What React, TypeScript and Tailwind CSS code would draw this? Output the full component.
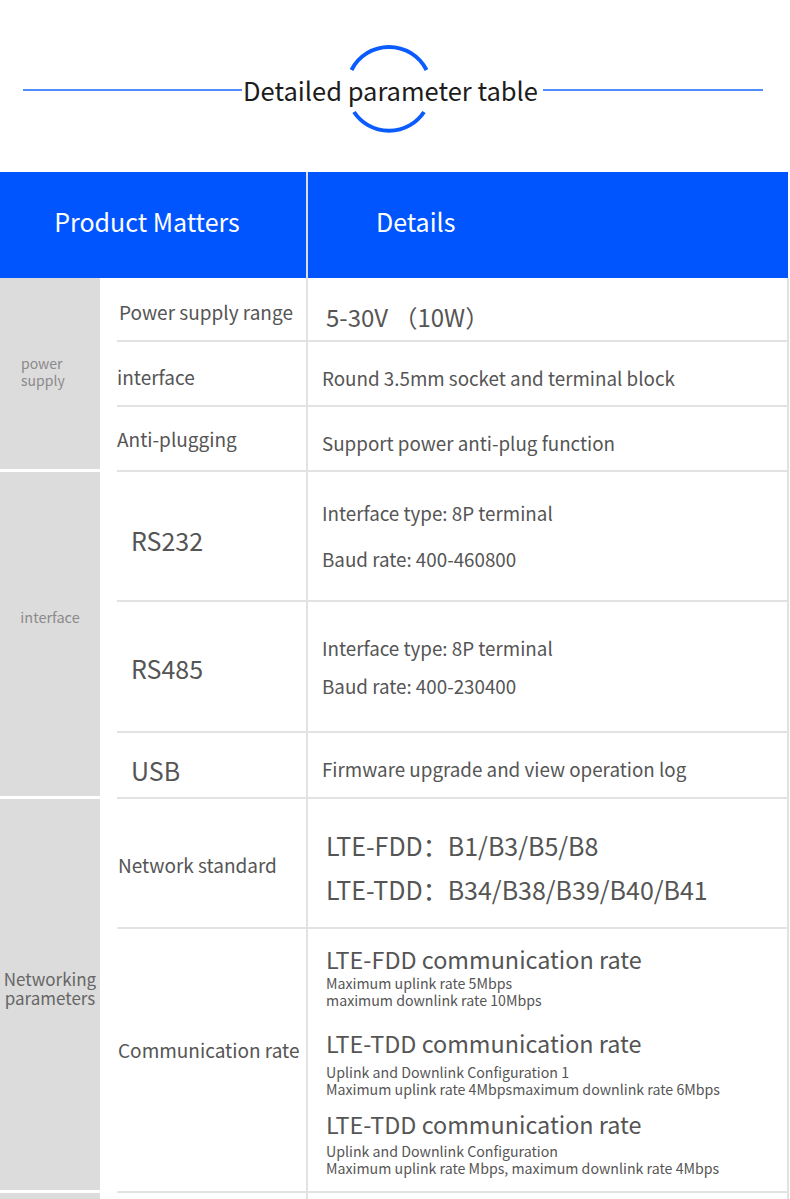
import React from "react"

const font = { fontFamily: '"Noto Sans CJK SC", "Noto Sans", sans-serif' }

type Row = {
  label: React.ReactNode
  detail: React.ReactNode
  h: string
}

type Group = {
  name: React.ReactNode
  rows: Row[]
}

const groups: Group[] = [
  {
    name: (
      <span className="block w-full pl-[21px] pb-[4px] text-left text-[14px] leading-[17px] text-[#8a8a8a]">
        power
        <br />
        supply
      </span>
    ),
    rows: [
      {
        h: "h-[64px]",
        label: <span className="pt-[6px] pl-[2px] text-[19px] text-[#555]">Power supply range</span>,
        detail: <span className="pt-[16px] pl-[18px] text-[24px] text-[#555]">5-30V （10W）</span>,
      },
      {
        h: "h-[65px]",
        label: <span className="pt-[8px] text-[19px] text-[#555]">interface</span>,
        detail: <span className="pt-[10px] pl-[14px] text-[18.8px] text-[#555]">Round 3.5mm socket and terminal block</span>,
      },
      {
        h: "h-[65px]",
        label: <span className="pt-[2px] text-[19px] text-[#555]">Anti-plugging</span>,
        detail: <span className="pt-[10px] pl-[14px] text-[18.8px] text-[#555]">Support power anti-plug function</span>,
      },
    ],
  },
  {
    name: <span className="block pb-[34px] text-[14.5px] text-[#8a8a8a]">interface</span>,
    rows: [
      {
        h: "h-[130px]",
        label: <span className="pt-[10px] pl-[14px] text-[25px] text-[#555]">RS232</span>,
        detail: (
          <div className="pl-[14px] text-[18.8px] text-[#555] leading-[26px]">
            <div>Interface type: 8P terminal</div>
            <div className="mt-[20px]">Baud rate: 400-460800</div>
          </div>
        ),
      },
      {
        h: "h-[131px]",
        label: <span className="pt-[4px] pl-[14px] text-[25px] text-[#555]">RS485</span>,
        detail: (
          <div className="pl-[14px] text-[18.8px] text-[#555] leading-[26px]">
            <div>Interface type: 8P terminal</div>
            <div className="mt-[12px]">Baud rate: 400-230400</div>
          </div>
        ),
      },
      {
        h: "h-[66px]",
        label: <span className="pt-[12px] pl-[14px] text-[25px] text-[#555]">USB</span>,
        detail: <span className="pt-[8px] pl-[14px] text-[18.8px] text-[#555]">Firmware upgrade and view operation log</span>,
      },
    ],
  },
  {
    name: (
      <span className="block pb-[14px] text-[17px] leading-[19px] text-[#666]">
        Networking
        <br />
        parameters
      </span>
    ),
    rows: [
      {
        h: "h-[130px]",
        label: <span className="pt-[4px] pl-px text-[19px] text-[#555]">Network standard</span>,
        detail: (
          <div className="pl-[18px] pt-[8px] text-[25px] text-[#555] leading-[34px]">
            <div>LTE-FDD：B1/B3/B5/B8</div>
            <div className="mt-[10px]">LTE-TDD：B34/B38/B39/B40/B41</div>
          </div>
        ),
      },
      {
        h: "h-[264px]",
        label: <span className="pb-[20px] pl-px text-[19px] text-[#555]">Communication rate</span>,
        detail: (
          <div className="self-start pl-[18px] pt-[16px] text-[#555]">
            <div className="text-[23.4px] leading-[28px]">LTE-FDD communication rate</div>
            <div className="mt-[2px] text-[14.2px] leading-[17px]">
              Maximum uplink rate 5Mbps
              <br />
              maximum downlink rate 10Mbps
            </div>
            <div className="mt-[20px] text-[23.4px] leading-[28px]">LTE-TDD communication rate</div>
            <div className="mt-[7px] text-[14.2px] leading-[17px]">
              Uplink and Downlink Configuration 1
              <br />
              Maximum uplink rate 4Mbpsmaximum downlink rate 6Mbps
            </div>
            <div className="mt-[12px] text-[23.4px] leading-[28px]">LTE-TDD communication rate</div>
            <div className="mt-[5px] text-[14.2px] leading-[17px]">
              Uplink and Downlink Configuration
              <br />
              Maximum uplink rate Mbps, maximum downlink rate 4Mbps
            </div>
          </div>
        ),
      },
    ],
  },
  {
    name: <span />,
    rows: [
      {
        h: "h-[80px]",
        label: <span />,
        detail: <span />,
      },
    ],
  },
]

function Title() {
  return (
    <div className="relative h-[172px]">
      <div className="flex items-center pl-[23px] pr-[27px] pt-[75px]">
        <div className="h-[2px] w-[219px] bg-[#4f8dff]" />
        <div className="pl-[1px] pr-[5px] text-[25.5px] leading-[30px] text-[#1c1c1c]">Detailed parameter table</div>
        <div className="h-[2px] flex-1 bg-[#4f8dff]" />
      </div>
      <svg className="absolute left-[339px] top-[39px]" width="100" height="100" viewBox="0 0 100 100" fill="none">
        <path d="M12.5 31 A42 42 0 0 1 87.5 31" stroke="#0a5cff" strokeWidth="4" />
        <path d="M15 73 A42 42 0 0 0 85 73" stroke="#0a5cff" strokeWidth="4" />
      </svg>
    </div>
  )
}

export default function App() {
  return (
    <div className="w-[790px] h-[1199px] overflow-hidden bg-white" style={font}>
      <Title />
      <div className="flex h-[106px]">
        <div className="flex w-[306px] items-center justify-center bg-[#0055ff] pb-[6px] pr-[12px] text-[25px] text-white">
          Product Matters
        </div>
        <div className="w-[2px] bg-[#dcdcdc]" />
        <div className="flex w-[480px] items-center bg-[#0055ff] pb-[6px] pl-[68px] text-[25px] text-white">
          Details
        </div>
      </div>
      {groups.map((g, i) => (
        <div key={i} className="flex">
          <div className="flex w-[100px] items-center justify-center border-b-[3px] border-white bg-[#dcdcdc] text-center">
            {g.name}
          </div>
          <div className="w-[17px]" />
          <div className="w-[672px]">
            {g.rows.map((r, j) => (
              <div key={j} className={`flex border-b-2 border-[#e2e2e2] ${r.h}`}>
                <div className="flex w-[189px] items-center">{r.label}</div>
                <div className="flex flex-1 items-center border-l-2 border-r-2 border-[#e2e2e2]">{r.detail}</div>
              </div>
            ))}
          </div>
        </div>
      ))}
    </div>
  )
}
